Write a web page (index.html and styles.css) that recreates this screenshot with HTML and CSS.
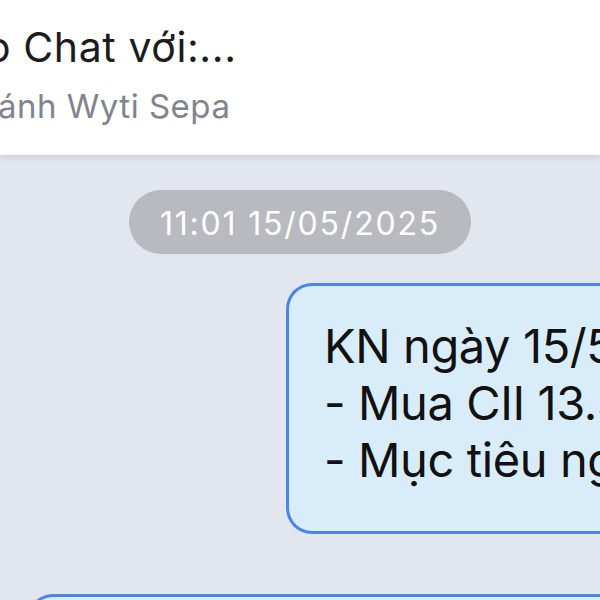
FILE: index.html
```html
<!DOCTYPE html>
<html lang="vi">
<head>
    <meta charset="UTF-8">
    <meta name="viewport" content="width=device-width, initial-scale=1.0">
    <title>Chat</title>
    <link rel="stylesheet" href="styles.css">
</head>
<body>
    <div class="screen">
        <div class="header">
            <div class="title">o Chat với:...</div>
            <div class="subtitle">ánh Wyti Sepa</div>
        </div>

        <div class="messages">
            <div class="time-row">
                <span class="time-pill">11:01 15/05/2025</span>
            </div>

            <div class="msg-row mine">
                <div class="bubble">KN ngày 15/5/2025
- Mua CII 13.500 x 1000
- Mục tiêu ngắn hạn</div>
            </div>

            <div class="msg-row theirs">
                <div class="bubble">&nbsp;</div>
            </div>
        </div>
    </div>
</body>
</html>
```

FILE: styles.css
```css
body {
    margin: 0;
    font-family: Inter, "Noto Sans", sans-serif;
    background-color: #e2e6ef;
}
.screen {
    width: 600px;
    height: 600px;
    overflow: hidden;
    background-color: #e2e6ef;
}
.header {
    height: 155px;
    background-color: #ffffff;
    box-shadow: 0 2px 8px rgba(0,0,0,0.12);
    position: relative;
    z-index: 1;
    overflow: hidden;
    white-space: nowrap;
}
.title {
    font-size: 41px;
    letter-spacing: 0.6px;
    color: #1c1c1e;
    margin-left: -14px;
    padding-top: 22px;
    line-height: 50px;
}
.subtitle {
    font-size: 33px;
    letter-spacing: 0.5px;
    color: #80848c;
    margin-left: -2px;
    margin-top: 12px;
    line-height: 44px;
}
.messages {
    padding-top: 35px;
}
.time-row {
    display: flex;
    justify-content: center;
}
.time-pill {
    display: inline-block;
    width: 342px;
    height: 64px;
    line-height: 68px;
    text-align: center;
    border-radius: 32px;
    background-color: #b8babf;
    color: #ffffff;
    font-size: 32px;
    letter-spacing: 1.8px;
}
.msg-row {
    display: flex;
    white-space: pre;
}
.msg-row.mine {
    margin-top: 29px;
    padding-left: 286px;
}
.msg-row.theirs {
    margin-top: 60px;
    padding-left: 27px;
}
.bubble {
    background-color: #d8ecfa;
    border: 3px solid #4886e8;
    border-radius: 26px;
    color: #111111;
    font-size: 47px;
    letter-spacing: -0.4px;
    line-height: 57px;
    padding: 31px 0 43px 35px;
    min-width: 400px;
    flex: 1 0 auto;
    border-right: none;
    border-top-right-radius: 0;
    border-bottom-right-radius: 0;
}
.theirs .bubble {
    min-width: 600px;
}
```
